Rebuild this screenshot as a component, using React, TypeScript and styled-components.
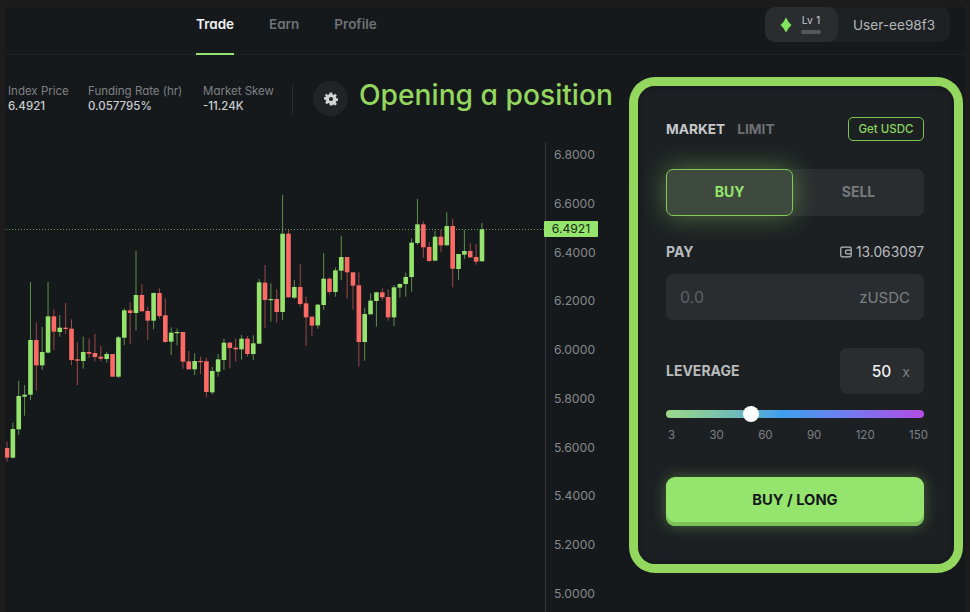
import React from 'react';
import styled, { createGlobalStyle } from 'styled-components';

const GREEN = '#95e46d';
const RED = '#fb6a65';

const GlobalStyle = createGlobalStyle`
    html, body {
        margin: 0;
        padding: 0;
        background: #1c1c1c;
    }
    * {
        box-sizing: border-box;
    }
`;

const Page = styled.div`
    width: 970px;
    height: 612px;
    overflow: hidden;
    padding: 7px 5px 0 5px;
    background: #1c1c1c;
    font-family: Inter, 'Liberation Sans', sans-serif;
    font-feature-settings: 'cv11' 1;
`;

const Frame = styled.div`
    position: relative;
    height: 605px;
    display: flex;
    flex-direction: column;
    background: #16191c;
`;

const Header = styled.header`
    height: 48px;
    flex: none;
    display: flex;
    justify-content: space-between;
    padding: 0 15px 0 191px;
    border-bottom: 1px solid #1e2224;
`;

const Nav = styled.nav`
    display: flex;
    gap: 35px;
`;

const NavItem = styled.a<{ $active?: boolean }>`
    width: ${({ $active }) => ($active ? '38px' : 'auto')};
    height: 48px;
    padding-top: 9px;
    font-size: 13.5px;
    line-height: 17px;
    font-weight: 600;
    white-space: nowrap;
    color: ${({ $active }) => ($active ? '#f1f2f2' : '#6f7275')};
    border-bottom: 2px solid ${({ $active }) => ($active ? GREEN : 'transparent')};
`;

const UserChip = styled.div`
    height: 35px;
    width: 185px;
    display: flex;
    align-items: center;
    border-radius: 10px;
    background: #1e2124;
`;

const LevelBox = styled.div`
    width: 73px;
    height: 35px;
    flex: none;
    display: flex;
    align-items: center;
    gap: 9px;
    padding-left: 15px;
    border-radius: 10px;
    background: #2a2d30;
`;

const LevelStack = styled.div`
    display: flex;
    flex-direction: column;
    align-items: center;
    gap: 3px;
`;

const LevelLabel = styled.span`
    font-size: 10.5px;
    line-height: 12px;
    color: #c4c6c7;
`;

const LevelBar = styled.span`
    display: block;
    width: 20px;
    height: 4px;
    border-radius: 2px;
    background: #55585b;
`;

const UserName = styled.span`
    margin-left: 15px;
    font-size: 13.6px;
    color: #b4b6b8;
    white-space: nowrap;
`;

const Body = styled.div`
    flex: 1;
    min-height: 0;
    display: flex;
`;

const ChartColumn = styled.div`
    width: 615px;
    flex: none;
    display: flex;
    flex-direction: column;
`;

const StatsBar = styled.div`
    height: 87px;
    flex: none;
    display: flex;
    align-items: flex-start;
    padding: 28px 0 0 3px;
`;

const Stat = styled.div<{ $width: number }>`
    width: ${({ $width }) => $width}px;
    flex: none;
`;

const StatLabel = styled.div`
    font-size: 11.5px;
    line-height: 16px;
    color: #7d8083;
    white-space: nowrap;
`;

const StatValue = styled.div`
    font-size: 11.5px;
    line-height: 15px;
    font-weight: 500;
    color: #c9cbcc;
    white-space: nowrap;
`;

const Divider = styled.div`
    width: 1px;
    height: 31px;
    margin: 1px 20px 0 0;
    flex: none;
    background: #2a2d30;
`;

const GearButton = styled.div`
    width: 35px;
    height: 35px;
    margin-top: -2px;
    flex: none;
    display: flex;
    align-items: center;
    justify-content: center;
    border-radius: 50%;
    background: #212427;
`;

const Annotation = styled.h1`
    margin: -6px 0 0 11px;
    font-size: 28.2px;
    line-height: 36px;
    font-weight: 500;
    color: #93d75f;
    white-space: nowrap;
`;

const ChartArea = styled.div`
    position: relative;
    flex: 1;
    min-height: 0;
`;

const ChartSvg = styled.svg`
    position: absolute;
    left: 0;
    top: 0;
`;

const Axis = styled.div`
    position: absolute;
    left: 540px;
    top: 0;
    bottom: 0;
    width: 70px;
    padding: 4px 0 0 8px;
    border-left: 1px solid #33363a;
    display: flex;
    flex-direction: column;
    gap: 30.78px;
`;

const AxisLabel = styled.span`
    height: 18px;
    font-size: 12.2px;
    line-height: 18px;
    color: #85888b;
`;

const PriceTag = styled.span`
    position: absolute;
    left: 539px;
    top: 79px;
    width: 54px;
    height: 16px;
    border-radius: 1px;
    background: ${GREEN};
    color: #1a2a12;
    font-size: 12.2px;
    line-height: 16px;
    text-align: center;
`;

const PanelOutline = styled.aside`
    position: absolute;
    left: 624px;
    top: 70px;
    width: 334px;
    height: 496px;
    padding: 9px;
    border-radius: 26px;
    background: #93d75f;
`;

const Panel = styled.div`
    height: 100%;
    padding: 31px 30px 0 28px;
    display: flex;
    flex-direction: column;
    border-radius: 17px;
    background: #1d2023;
    box-shadow: inset 0 0 6px #15171a;
`;

const TopRow = styled.div`
    height: 24px;
    display: flex;
    align-items: center;
    gap: 12px;
`;

const OrderTab = styled.span<{ $active?: boolean }>`
    font-size: 13.7px;
    font-weight: 700;
    color: ${({ $active }) => ($active ? '#c6c8c9' : '#6d7073')};
`;

const GetButton = styled.button`
    margin-left: auto;
    width: 76px;
    height: 24px;
    padding: 0;
    border: 1px solid #7cc653;
    border-radius: 5px;
    background: transparent;
    color: #8ad560;
    font: inherit;
    font-size: 11.5px;
    font-weight: 500;
`;

const SideSwitch = styled.div`
    margin-top: 28px;
    height: 47px;
    display: flex;
    border-radius: 7px;
    background: #2a2d30;
`;

const SideButton = styled.div<{ $active?: boolean }>`
    width: ${({ $active }) => ($active ? '127px' : 'auto')};
    flex: ${({ $active }) => ($active ? 'none' : 1)};
    display: flex;
    align-items: center;
    justify-content: center;
    padding-bottom: 2px;
    font-size: 14px;
    font-weight: 700;
    color: ${({ $active }) => ($active ? GREEN : '#787b7e')};
    border-radius: 7px;
    ${({ $active }) =>
        $active &&
        `
        border: 1px solid #7ecb57;
        background: #3d4a3d;
        box-shadow: 0 0 26px rgba(149, 228, 109, 0.42);
    `}
`;

const FieldHeader = styled.div`
    margin-top: 26px;
    height: 20px;
    display: flex;
    align-items: center;
    justify-content: space-between;
`;

const FieldLabel = styled.span`
    padding-bottom: 1px;
    font-size: 14px;
    font-weight: 700;
    color: #b9bbbd;
`;

const Balance = styled.span`
    display: flex;
    align-items: center;
    gap: 4px;
    font-size: 13.8px;
    color: #b9bbbd;
`;

const AmountInput = styled.div`
    margin-top: 12px;
    height: 46px;
    padding: 0 14px;
    display: flex;
    align-items: center;
    justify-content: space-between;
    border-radius: 7px;
    background: #2a2d30;
    font-size: 16px;
    color: #5d6063;
`;

const Unit = styled.span`
    font-size: 15px;
    color: #7d8083;
`;

const LeverageRow = styled.div`
    margin-top: 28px;
    display: flex;
    align-items: center;
    justify-content: space-between;
`;

const LeverageInput = styled.div`
    width: 84px;
    height: 46px;
    padding-right: 14px;
    display: flex;
    align-items: center;
    justify-content: flex-end;
    gap: 11px;
    border-radius: 7px;
    background: #2a2d30;
    font-size: 15.5px;
    font-weight: 500;
    color: #eeeff0;
`;

const LeverageUnit = styled.span`
    font-size: 14px;
    font-weight: 400;
    color: #7d8083;
`;

const SliderTrack = styled.div`
    position: relative;
    margin-top: 16px;
    height: 8px;
    border-radius: 4px;
    background: linear-gradient(90deg, #9bd887 0%, #6fb9bb 28%, #3f9ff0 45%, #6d80ee 68%, #b44be4 100%);
`;

const SliderThumb = styled.span`
    position: absolute;
    left: 77px;
    top: -4px;
    width: 16px;
    height: 16px;
    border-radius: 50%;
    background: #fff;
`;

const SliderMarks = styled.div`
    margin-top: 9px;
    display: flex;
    justify-content: space-between;
    padding: 0 0 0 2px;
    margin-right: -4px;
    font-size: 11.5px;
    line-height: 16px;
    color: #7d8083;
`;

const SubmitButton = styled.button`
    margin-top: 34px;
    height: 49px;
    flex: none;
    padding: 0 0 4px;
    border: none;
    border-radius: 9px;
    background: ${GREEN};
    box-shadow: inset 0 -4px 0 #7cc05a, 0 0 14px rgba(149, 228, 109, 0.35);
    color: #14171a;
    font: inherit;
    font-size: 14.7px;
    font-weight: 700;
`;

type Candle = [number, number, number, number, 'g' | 'r'];

// [high, top, bottom, low, colour] read off the 3x crops
const raw: Candle[] = [
    [785, 804, 833, 845, 'r'], [728, 747, 833, 836, 'g'], [602, 648, 748, 765, 'g'], [615, 644, 650, 707, 'g'],
    [306, 480, 644, 660, 'g'], [427, 480, 556, 632, 'r'], [441, 516, 556, 570, 'g'], [306, 409, 518, 518, 'g'],
    [388, 409, 455, 510, 'r'], [405, 443, 456, 470, 'g'], [369, 443, 447, 462, 'r'], [418, 446, 540, 555, 'r'],
    [487, 538, 542, 615, 'r'], [470, 516, 543, 566, 'g'], [476, 516, 521, 533, 'r'], [462, 519, 531, 544, 'r'],
    [498, 530, 536, 544, 'r'], [515, 522, 537, 548, 'g'], [522, 522, 590, 590, 'r'], [468, 472, 590, 594, 'g'],
    [385, 391, 473, 496, 'g'], [367, 391, 399, 492, 'r'], [213, 345, 399, 452, 'g'], [312, 345, 394, 394, 'r'],
    [380, 393, 422, 480, 'r'], [338, 339, 422, 448, 'g'], [325, 339, 408, 415, 'r'], [355, 406, 486, 488, 'r'],
    [442, 458, 485, 525, 'g'], [446, 456, 459, 496, 'g'], [456, 456, 545, 566, 'r'], [513, 544, 568, 568, 'r'],
    [520, 543, 568, 585, 'g'], [530, 543, 546, 582, 'r'], [533, 544, 636, 652, 'r'], [561, 573, 637, 643, 'g'],
    [522, 538, 575, 590, 'g'], [476, 488, 540, 570, 'g'], [485, 488, 504, 565, 'r'], [475, 503, 508, 545, 'r'],
    [465, 476, 508, 539, 'g'], [468, 476, 522, 530, 'r'], [466, 490, 522, 540, 'g'], [297, 307, 491, 491, 'g'],
    [255, 308, 360, 444, 'r'], [310, 357, 360, 425, 'g'], [328, 357, 396, 428, 'r'], [44, 161, 396, 420, 'g'],
    [150, 161, 352, 352, 'r'], [300, 321, 353, 357, 'g'], [252, 321, 372, 380, 'r'], [350, 370, 412, 497, 'r'],
    [410, 410, 437, 468, 'r'], [372, 374, 436, 446, 'g'], [220, 296, 375, 390, 'g'], [292, 296, 336, 343, 'r'],
    [262, 271, 336, 350, 'g'], [167, 231, 272, 301, 'g'], [231, 231, 277, 356, 'r'], [277, 277, 317, 389, 'r'],
    [277, 316, 486, 560, 'r'], [383, 402, 486, 542, 'g'], [340, 362, 403, 403, 'g'], [335, 337, 363, 440, 'g'],
    [325, 337, 352, 362, 'r'], [328, 351, 412, 422, 'r'], [315, 322, 412, 438, 'g'], [310, 312, 323, 353, 'g'],
    [278, 291, 312, 350, 'g'], [175, 188, 291, 335, 'g'], [57, 133, 189, 195, 'g'], [124, 133, 202, 233, 'r'],
    [186, 201, 243, 245, 'r'], [152, 170, 242, 242, 'g'], [150, 170, 196, 217, 'r'], [97, 138, 196, 196, 'g'],
    [116, 138, 266, 322, 'r'], [222, 222, 267, 300, 'g'], [150, 213, 224, 237, 'g'], [190, 213, 232, 234, 'r'],
    [192, 231, 245, 254, 'r'], [129, 148, 244, 244, 'g'],
];

// crops started at page y=180, the svg starts at y=142
const toY = (v: number) => v / 3 + 180 - 142;
const candles: Candle[] = raw.map(([h, t, b, l, c]) => [toY(h), toY(t), toY(b), toY(l), c]);

const prices = ['6.8000', '6.6000', '6.4000', '6.2000', '6.0000', '5.8000', '5.6000', '5.4000', '5.2000', '5.0000'];

const CandleChart: React.FC = () => (
    <ChartSvg width="540" height="470" viewBox="0 0 540 470">
        <line x1="1" y1="87.5" x2="540" y2="87.5" stroke="#6d9a55" strokeWidth="1" strokeDasharray="1 2" />
        {candles.map(([high, top, bottom, low, color], i) => {
            const x = 2 + i * 5.864;
            const fill = color === 'g' ? GREEN : RED;
            return (
                <g key={i}>
                    <line x1={x} x2={x} y1={high} y2={low} stroke={fill} strokeOpacity="0.58" strokeWidth="1" />
                    <rect x={x - 2.3} y={top} width="4.6" height={Math.max(bottom - top, 1.2)} fill={fill} />
                </g>
            );
        })}
    </ChartSvg>
);

const App: React.FC = () => (
    <Page>
        <GlobalStyle />
        <Frame>
            <Header>
                <Nav>
                    <NavItem $active>Trade</NavItem>
                    <NavItem>Earn</NavItem>
                    <NavItem>Profile</NavItem>
                </Nav>
                <UserChip>
                    <LevelBox>
                        <svg width="12" height="16" viewBox="0 0 12 16">
                            <path d="M6 0.5 Q8 5 11.5 8 Q8 11 6 15.5 Q4 11 0.5 8 Q4 5 6 0.5 Z" fill="#7fe35c" />
                        </svg>
                        <LevelStack>
                            <LevelLabel>Lv 1</LevelLabel>
                            <LevelBar />
                        </LevelStack>
                    </LevelBox>
                    <UserName>User-ee98f3</UserName>
                </UserChip>
            </Header>
            <Body>
                <ChartColumn>
                    <StatsBar>
                        <Stat $width={80}>
                            <StatLabel>Index Price</StatLabel>
                            <StatValue>6.4921</StatValue>
                        </Stat>
                        <Stat $width={115}>
                            <StatLabel>Funding Rate (hr)</StatLabel>
                            <StatValue>0.057795%</StatValue>
                        </Stat>
                        <Stat $width={89}>
                            <StatLabel>Market Skew</StatLabel>
                            <StatValue>-11.24K</StatValue>
                        </Stat>
                        <Divider />
                        <GearButton>
                            <svg width="14" height="14" viewBox="0 0 24 24" fill="#d2d4d5">
                                <path
                                    fillRule="evenodd"
                                    d="M10 1h4l.6 3.2 1.9.8 2.7-1.8 2.8 2.8-1.8 2.7.8 1.9 3 .6v4l-3 .6-.8 1.9 1.8 2.7-2.8 2.8-2.7-1.8-1.9.8L14 23h-4l-.6-3.2-1.9-.8-2.7 1.8-2.8-2.8 1.8-2.7-.8-1.9-3-.6v-4l3-.6.8-1.9L1 6l2.8-2.8 2.7 1.8 1.9-.8L10 1zm2 7.5a3.5 3.5 0 1 0 0 7 3.5 3.5 0 0 0 0-7z"
                                />
                            </svg>
                        </GearButton>
                        <Annotation>Opening a position</Annotation>
                    </StatsBar>
                    <ChartArea>
                        <CandleChart />
                        <Axis>
                            {prices.map((p) => (
                                <AxisLabel key={p}>{p}</AxisLabel>
                            ))}
                        </Axis>
                        <PriceTag>6.4921</PriceTag>
                    </ChartArea>
                </ChartColumn>
            </Body>
            <PanelOutline>
                <Panel>
                    <TopRow>
                        <OrderTab $active>MARKET</OrderTab>
                        <OrderTab>LIMIT</OrderTab>
                        <GetButton>Get USDC</GetButton>
                    </TopRow>
                    <SideSwitch>
                        <SideButton $active>BUY</SideButton>
                        <SideButton>SELL</SideButton>
                    </SideSwitch>
                    <FieldHeader>
                        <FieldLabel>PAY</FieldLabel>
                        <Balance>
                            <svg width="12" height="12" viewBox="0 0 12 12" fill="none" stroke="#b9bbbd" strokeWidth="1.2">
                                <rect x="0.8" y="1.2" width="10.4" height="9.6" rx="1.2" />
                                <path d="M11 4.2H7.2a1.8 1.8 0 0 0 0 3.6H11" />
                            </svg>
                            13.063097
                        </Balance>
                    </FieldHeader>
                    <AmountInput>
                        0.0
                        <Unit>zUSDC</Unit>
                    </AmountInput>
                    <LeverageRow>
                        <FieldLabel>LEVERAGE</FieldLabel>
                        <LeverageInput>
                            50
                            <LeverageUnit>x</LeverageUnit>
                        </LeverageInput>
                    </LeverageRow>
                    <SliderTrack>
                        <SliderThumb />
                    </SliderTrack>
                    <SliderMarks>
                        <span>3</span>
                        <span>30</span>
                        <span>60</span>
                        <span>90</span>
                        <span>120</span>
                        <span>150</span>
                    </SliderMarks>
                    <SubmitButton>BUY / LONG</SubmitButton>
                </Panel>
            </PanelOutline>
        </Frame>
    </Page>
);

export default App;
